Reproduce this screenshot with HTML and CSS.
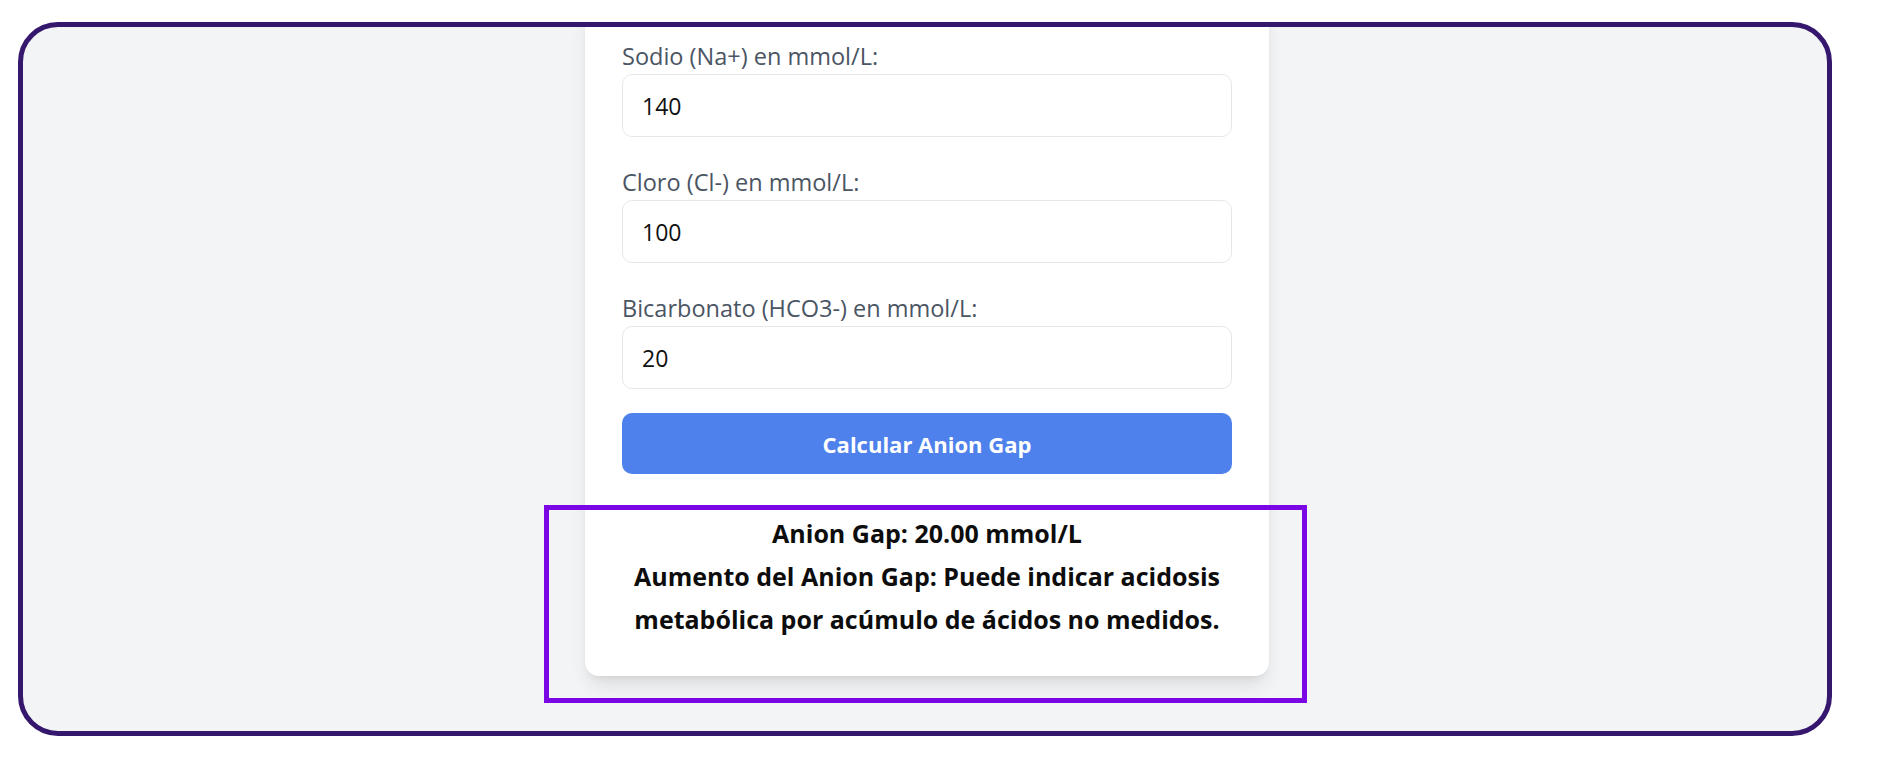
FILE: index.html
```html
<!DOCTYPE html>
<html lang="es">
<head>
    <meta charset="UTF-8">
    <meta name="viewport" content="width=device-width, initial-scale=1.0">
    <title>Calculadora Anion Gap</title>
    <link rel="stylesheet" href="styles.css">
</head>
<body>
    <div class="frame">
        <main class="card">
            <div class="field">
                <label for="sodio">Sodio (Na+) en mmol/L:</label>
                <input id="sodio" type="number" value="140">
            </div>
            <div class="field">
                <label for="cloro">Cloro (Cl-) en mmol/L:</label>
                <input id="cloro" type="number" value="100">
            </div>
            <div class="field last">
                <label for="bicarbonato">Bicarbonato (HCO3-) en mmol/L:</label>
                <input id="bicarbonato" type="number" value="20">
            </div>
            <button class="calc" type="button">Calcular Anion Gap</button>
            <div class="result">
                <p>Anion Gap: 20.00 mmol/L</p>
                <p>Aumento del Anion Gap: Puede indicar acidosis metabólica por acúmulo de ácidos no medidos.</p>
            </div>
        </main>
    </div>
    <!-- annotation box drawn over the result -->
    <div class="highlight"></div>
</body>
</html>
```

FILE: styles.css
```css
body {
    margin: 0;
    height: 768px;
    overflow: hidden;
    position: relative;
    background: #ffffff;
    font-family: "Open Sans", "Noto Sans", sans-serif;
}

.frame {
    box-sizing: border-box;
    height: 714px;
    margin: 22px 50px 0 18px;
    padding-bottom: 55px;
    border: 5px solid #35186e;
    border-radius: 40px;
    background: #f3f4f6;
    overflow: hidden;
    display: flex;
    flex-direction: column;
    align-items: center;
    justify-content: flex-end;
}

.card {
    box-sizing: border-box;
    width: 684px;
    flex-shrink: 0;
    margin-left: 4px;
    padding: 37px 37px 35px;
    background: #ffffff;
    border-radius: 14px;
    box-shadow: 0 12px 19px -4px rgba(0, 0, 0, 0.1), 0 5px 8px -5px rgba(0, 0, 0, 0.1);
}

.field {
    display: flex;
    flex-direction: column;
    gap: 3px;
    margin-bottom: 30px;
}

.field.last {
    margin-bottom: 24px;
}

.field label {
    font-size: 23.5px;
    line-height: 30px;
    color: #4b5563;
}

.field input {
    box-sizing: border-box;
    height: 63px;
    padding: 0 19px;
    border: 1px solid #e5e7eb;
    border-radius: 10px;
    font-family: inherit;
    font-size: 23px;
    color: #111111;
    outline: none;
}

.calc {
    display: block;
    width: 100%;
    height: 61px;
    border: 0;
    border-radius: 10px;
    background: #4f81ed;
    color: #ffffff;
    font-family: inherit;
    font-size: 22px;
    font-weight: 700;
}

.result {
    margin-top: 38px;
    text-align: center;
    font-size: 25px;
    line-height: 43px;
    font-weight: 700;
    color: #0d0d0d;
}

.result p {
    margin: 0;
}

.highlight {
    position: absolute;
    left: 544px;
    top: 505px;
    width: 763px;
    height: 198px;
    box-sizing: border-box;
    border: 5px solid #7a06e5;
}
```
